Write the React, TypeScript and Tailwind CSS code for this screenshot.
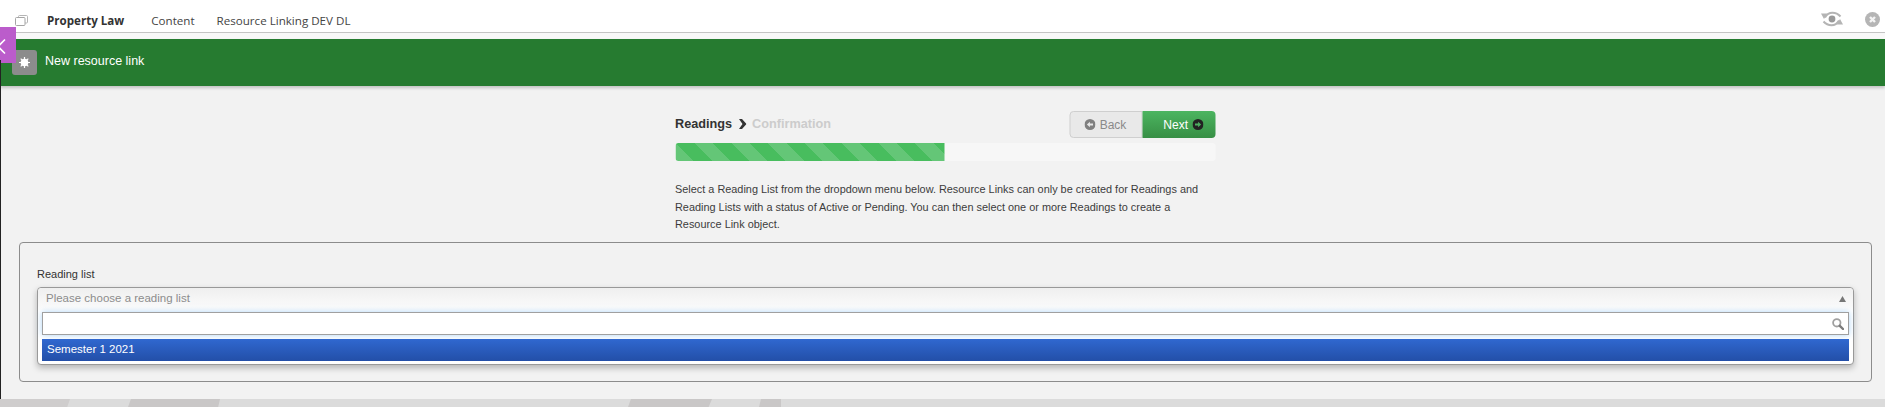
function CircleArrow({ dir, bg }: { dir: "left" | "right"; bg: string }) {
  return (
    <svg width="11" height="11" viewBox="0 0 11 11" className="shrink-0">
      <circle cx="5.5" cy="5.5" r="5.5" fill={bg} />
      {dir === "left" ? (
        <path d="M2.4 5.5 5.4 2.8V4.5H8.5V6.5H5.4V8.2Z" fill="#e8e8e8" />
      ) : (
        <path d="M8.6 5.5 5.6 2.8V4.5H2.5V6.5H5.6V8.2Z" fill="#4caf60" />
      )}
    </svg>
  );
}

function PreviewIcon() {
  return (
    <svg width="22" height="16" viewBox="0 0 22 16" fill="none">
      <path d="M4 6.500C6 3 8.500 1.800 11.500 1.800c3 0 5.500 1 8 3.700" stroke="#b4b4b4" strokeWidth="2" />
      <path d="M18 9.500c-2 3.500-4.500 4.700-7.500 4.700s-5.500-1-8-3.700" stroke="#b4b4b4" strokeWidth="2" />
      <circle cx="11" cy="8" r="3.400" fill="#999999" />
      <path d="M0 2.500 6.500 2.500 3 8Z" fill="#b4b4b4" />
      <path d="M22 13.500 15.500 13.500 19 8Z" fill="#b4b4b4" />
    </svg>
  );
}

function CloseIcon() {
  return (
    <svg width="15" height="15" viewBox="0 0 15 15">
      <circle cx="7.500" cy="7.500" r="7.500" fill="#b5b5b5" />
      <path d="M5 5 10 10M10 5 5 10" stroke="#f4f4f4" strokeWidth="2.400" />
    </svg>
  );
}

function CourseIcon() {
  return (
    <svg width="13" height="12" viewBox="0 0 13 12" fill="none">
      <rect x="3.500" y="0.500" width="9" height="7.500" rx="1" stroke="#b5b5b5" />
      <rect x="0.500" y="2.500" width="9.500" height="8" rx="1" fill="#ffffff" stroke="#a5a5a5" />
    </svg>
  );
}

function SearchIcon() {
  return (
    <svg width="12" height="12" viewBox="0 0 12 12" fill="none">
      <circle cx="4.800" cy="4.800" r="3.700" stroke="#a0a0a0" strokeWidth="1.800" />
      <path d="M7.800 7.800 11 11" stroke="#7c7c7c" strokeWidth="2.400" strokeLinecap="round" />
    </svg>
  );
}

export default function App() {
  return (
    <div className="relative h-[407px] w-[1885px] overflow-hidden bg-[#f2f2f2] font-['Liberation_Sans',sans-serif] text-[#333333]">
      {/* top nav */}
      <div className="flex h-[33px] items-center border-b border-[#c4c4c4] bg-white pt-[9px] font-['Open_Sans',sans-serif] text-[11.600px] text-[#444444]">
        <div className="ml-[15px] w-[32px]">
          <CourseIcon />
        </div>
        <span className="font-bold text-[#333333]">Property Law</span>
        <span className="ml-[27px]">Content</span>
        <span className="ml-[22px]">Resource Linking DEV DL</span>
        <div className="-mt-[3px] ml-auto mr-[5px] flex items-center gap-[22px]">
          <PreviewIcon />
          <CloseIcon />
        </div>
      </div>

      <div className="h-[6px] bg-[#f8f8f8]" />

      {/* green title bar */}
      <div className="flex h-[47px] items-center bg-[#267b30] pb-[3px] pl-[45px] text-[12.500px] text-white shadow-[0_2px_3px_rgba(0,0,0,0.2)]">
        New resource link
      </div>

      {/* page icon and collapse tab */}
      <div className="absolute left-[12px] top-[50px] flex h-[25px] w-[25px] items-center justify-center rounded-[3px] bg-[#8c8c8c]">
        <svg width="11" height="11" viewBox="0 0 11 11">
          <circle cx="5.500" cy="5.500" r="3.800" fill="#ffffff" />
          <path d="M5.500 0V11M0 5.500H11M1.700 1.700 9.300 9.300M9.300 1.700 1.700 9.300" stroke="#ffffff" strokeWidth="1.200" />
        </svg>
      </div>
      <div className="absolute left-0 top-[27px] h-[36px] w-[16px] overflow-hidden bg-[#bb5ccb]">
        <svg width="16" height="36" viewBox="0 0 16 36" fill="none">
          <path d="M5 12.500-2 19.500 5 26.500" stroke="#ffffff" strokeWidth="1.600" />
        </svg>
      </div>

      {/* left window edge */}
      <div className="absolute bottom-[8px] left-0 top-[60px] w-px bg-[#222222]" />

      {/* wizard */}
      <div className="mx-auto mt-[25px] w-[540px] translate-x-[2.500px]">
        <div className="flex h-[27px] items-center justify-between">
          <div className="flex items-center text-[12.700px] font-bold">
            <span>Readings</span>
            <svg width="8" height="10" viewBox="0 0 8 10" className="ml-[6px] mr-[6px]">
              <path d="M0.500 0 3.500 0 8 5 3.500 10 0.500 10 4 5Z" fill="#333333" />
            </svg>
            <span className="text-[#cccccc]">Confirmation</span>
          </div>
          <div className="flex h-[27px] text-[12px]">
            <div className="flex w-[73px] items-center justify-center gap-[4px] rounded-l-[4px] border border-[#cfcfcf] bg-[#e9e9e9] text-[#8a8a8a]">
              <CircleArrow dir="left" bg="#808080" />
              Back
            </div>
            <div className="flex w-[73px] items-center justify-end gap-[4px] rounded-r-[4px] bg-gradient-to-b from-[#4cb560] to-[#378f45] pr-[12px] text-white">
              Next
              <CircleArrow dir="right" bg="#222222" />
            </div>
          </div>
        </div>

        <div className="mt-[5px] h-[18px] overflow-hidden rounded-[3px] bg-[#f7f7f7]">
          <div className="h-full w-[269px] bg-[repeating-linear-gradient(45deg,#64c677_0,#64c677_13px,#48bd5e_13px,#48bd5e_26px)]" />
        </div>

        <p className="mt-[20px] text-[10.900px] leading-[17.500px] text-[#3c3c3c]">
          Select a Reading List from the dropdown menu below. Resource Links can only be created for Readings and Reading
          Lists with a status of Active or Pending. You can then select one or more Readings to create a Resource Link
          object.
        </p>
      </div>

      {/* reading list panel */}
      <div className="absolute left-[19px] top-[242px] h-[140px] w-[1853px] rounded-[4px] border border-[#8c8c8c] px-[17px] pt-[23px]">
        <div className="text-[11px] leading-[16px] text-[#333333]">Reading list</div>
        <div className="mt-[5px] h-[78px] rounded-[4px] border border-[#999999] bg-white shadow-[0_3px_6px_rgba(0,0,0,0.25)]">
          <div className="flex h-[22px] items-center justify-between rounded-t-[4px] bg-gradient-to-b from-[#efefef] to-[#fcfcfc] pl-[8px] pr-[7px] text-[11.500px] text-[#8c8c8c]">
            Please choose a reading list
            <svg width="7" height="6" viewBox="0 0 7 6">
              <path d="M3.500 0 7 6H0Z" fill="#777777" />
            </svg>
          </div>
          <div className="mx-[4px] mt-[2px] flex h-[23px] items-center justify-end border border-[#a0a0a0] bg-white pr-[4px] shadow-[0_0_6px_rgba(120,185,240,0.6)]">
            <SearchIcon />
          </div>
          <div className="mx-[4px] mt-[4px] flex h-[22px] items-center bg-gradient-to-b from-[#3068d0] to-[#234fa8] pl-[5px] text-[11.500px] text-white">
            Semester 1 2021
          </div>
        </div>
      </div>

      {/* footer strip */}
      <div className="absolute bottom-0 left-0 h-[8px] w-full bg-[#dbdbdb]">
        <div className="absolute left-0 top-0 h-[8px] w-[70px] bg-[#cfcdcd] [clip-path:polygon(0_0,100%_0,96%_100%,0_100%)]" />
        <div className="absolute left-[128px] top-0 h-[8px] w-[92px] bg-[#c9c7c7] [clip-path:polygon(3px_0,100%_0,98%_100%,0_100%)]" />
        <div className="absolute left-[628px] top-0 h-[8px] w-[84px] bg-[#c9c7c7] [clip-path:polygon(3px_0,100%_0,96%_100%,0_100%)]" />
        <div className="absolute left-[759px] top-0 h-[8px] w-[22px] bg-[#c9c7c7] [clip-path:polygon(2px_0,100%_0,100%_100%,0_100%)]" />
      </div>
    </div>
  );
}
